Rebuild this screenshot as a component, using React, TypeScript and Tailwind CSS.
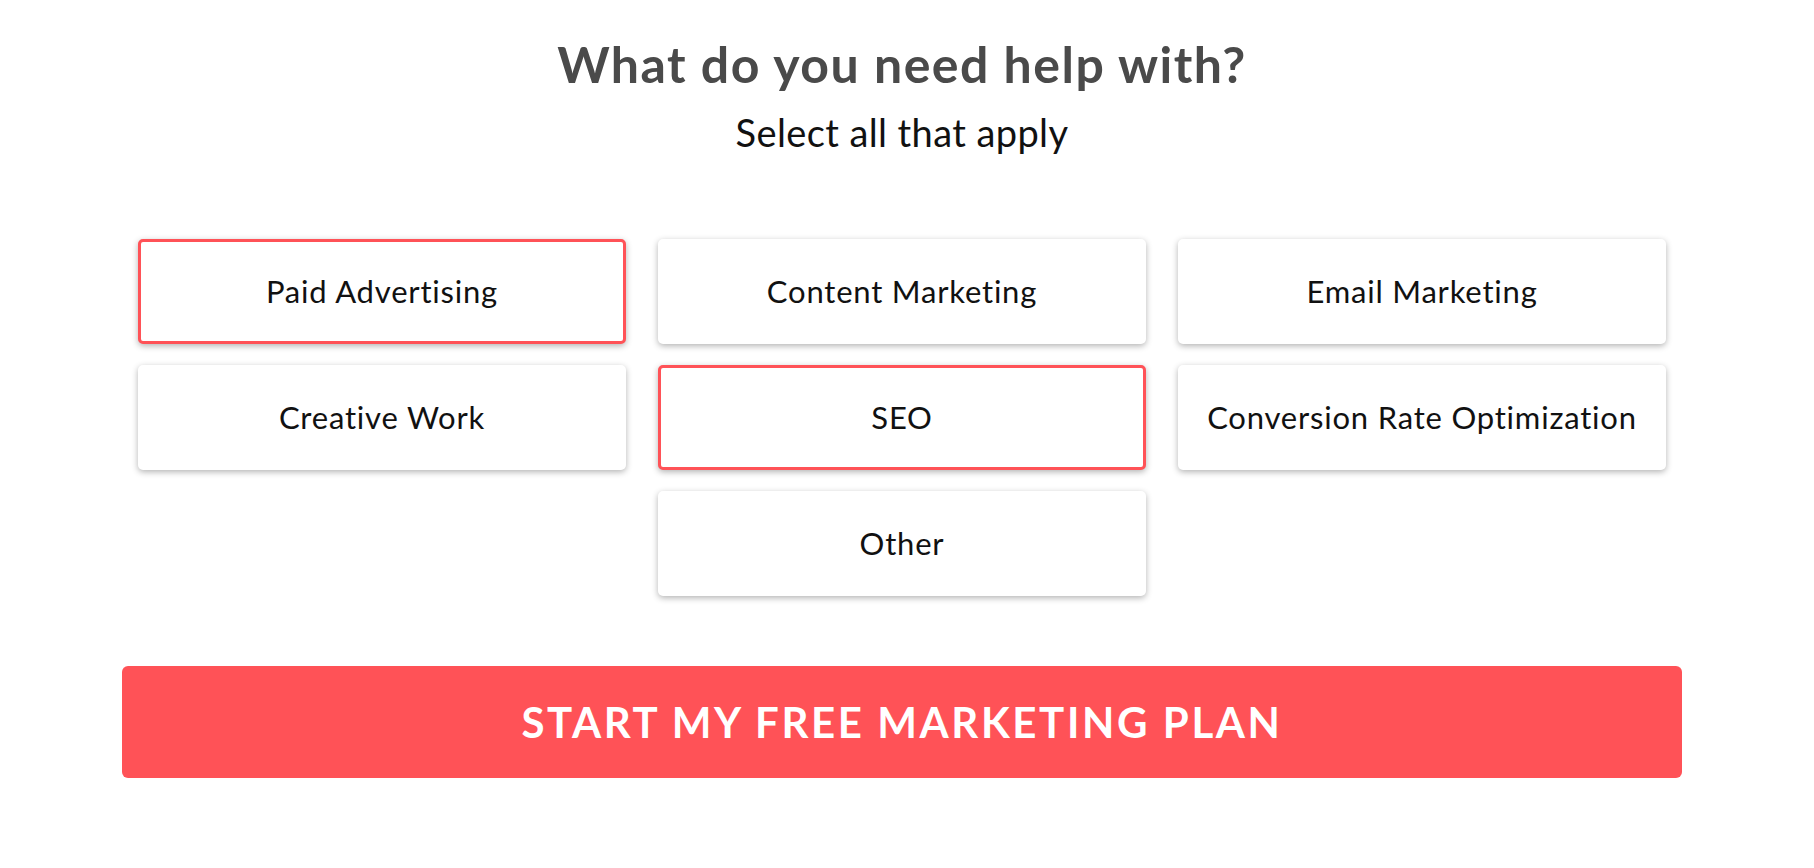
import { useState } from 'react';

const OPTIONS = [
  'Paid Advertising',
  'Content Marketing',
  'Email Marketing',
  'Creative Work',
  'SEO',
  'Conversion Rate Optimization',
  'Other',
];

export default function App() {
  const [picked, setPicked] = useState<string[]>(['Paid Advertising', 'SEO']);

  const toggle = (name: string) =>
    setPicked(p => (p.includes(name) ? p.filter(n => n !== name) : [...p, name]));

  return (
    <div className="min-h-screen bg-white pr-[10px] font-['Lato','Liberation_Sans',sans-serif]">
      <div className="mx-auto w-[1560px] pt-[36px]">
        {/* Heading */}
        <h1 className="text-center text-[50px] leading-[56px] font-bold tracking-[1.5px] text-[#4a4a4a]">
          What do you need help with?
        </h1>
        <p className="mt-[18px] text-center text-[38px] leading-[44px] tracking-[0.4px] text-[#111]">
          Select all that apply
        </p>

        {/* Option cards */}
        <div className="mt-[85px] grid grid-cols-3 gap-x-8 gap-y-[21px] px-4">
          {OPTIONS.map(name => {
            const on = picked.includes(name);
            return (
              <button
                key={name}
                onClick={() => toggle(name)}
                className={`flex h-[105px] items-center justify-center rounded-[5px] bg-white text-[31px] tracking-[0.8px] text-[#111] shadow-[0_2px_6px_rgba(0,0,0,0.3)] ${
                  on ? 'border-[3px] border-[#ff5257]' : 'border-[3px] border-transparent'
                } ${name === 'Other' ? 'col-start-2' : ''}`}
              >
                {name}
              </button>
            );
          })}
        </div>

        {/* Submit */}
        <button className="mt-[70px] flex h-[112px] w-full items-center justify-center rounded-[6px] bg-[#ff5257] text-[42px] font-bold tracking-[2.6px] text-white">
          START MY FREE MARKETING PLAN
        </button>
      </div>
    </div>
  );
}
